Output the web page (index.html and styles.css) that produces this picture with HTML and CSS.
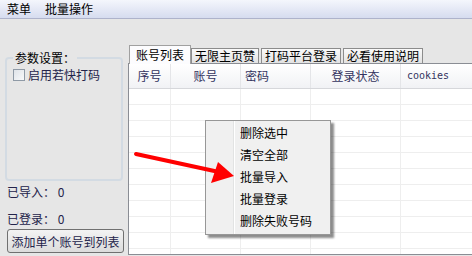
FILE: index.html
```html
<!DOCTYPE html>
<html lang="zh-CN">
<head>
    <meta charset="UTF-8">
    <title>批量操作</title>
    <link rel="stylesheet" href="styles.css">
</head>
<body>

<!-- 菜单栏 -->
<div class="menubar">
    <span class="menu-item">菜单</span>
    <span class="menu-item">批量操作</span>
</div>

<div class="main">
    <!-- 左侧设置 -->
    <div class="side">
        <fieldset class="group">
            <legend>参数设置：</legend>
            <label class="check"><span class="box"></span>启用若快打码</label>
        </fieldset>
        <div class="stat stat-import">已导入： 0</div>
        <div class="stat stat-login">已登录： 0</div>
        <button class="btn">添加单个账号到列表</button>
    </div>

    <!-- 选项卡 -->
    <div class="tabs-area">
        <div class="tab-strip">
            <span class="tab active">账号列表</span>
            <span class="tab">无限主页赞</span>
            <span class="tab">打码平台登录</span>
            <span class="tab">必看使用说明</span>
        </div>
        <div class="listview">
            <div class="lv-head">
                <div class="col c1 center">序号</div>
                <div class="col c2 center">账号</div>
                <div class="col c3">密码</div>
                <div class="col c4 center">登录状态</div>
                <div class="col c5 mono">cookies</div>
            </div>
            <div class="lv-body" id="rows"></div>
        </div>
    </div>
</div>

<!-- 右键菜单 -->
<div class="ctx-menu">
    <div class="ctx-item">删除选中</div>
    <div class="ctx-item">清空全部</div>
    <div class="ctx-item">批量导入</div>
    <div class="ctx-item">批量登录</div>
    <div class="ctx-item">删除失败号码</div>
</div>

<!-- 红色箭头 -->
<svg class="arrow" width="472" height="256" viewBox="0 0 472 256">
    <line x1="136" y1="154" x2="219" y2="172" stroke="#ff0000" stroke-width="4" stroke-linecap="round"/>
    <polygon points="234,176 218,162 211,183" fill="#ff0000"/>
</svg>

<script>
    // 填充空行
    var rows = document.getElementById("rows");
    for (var i = 0; i < 11; i++) {
        var row = document.createElement("div");
        row.className = "lv-row";
        for (var j = 1; j <= 5; j++) {
            var cell = document.createElement("div");
            cell.className = "col c" + j;
            row.appendChild(cell);
        }
        rows.appendChild(row);
    }
</script>

</body>
</html>
```

FILE: styles.css
```css
body {
    margin: 0;
    width: 472px;
    height: 256px;
    overflow: hidden;
    background-color: #e6e6e6;
    font-family: "Noto Sans CJK SC", "Noto Sans", sans-serif;
    font-size: 12px;
    color: #000;
    position: relative;
}
.menubar {
    height: 18px;
    background: linear-gradient(#f4f6fc, #d6dcef);
    border-bottom: 1px solid #aeb3cb;
    display: flex;
    align-items: center;
}
.menu-item {
    padding: 0 7px;
    line-height: 18px;
}
.main {
    display: flex;
}
.side {
    width: 128px;
    flex-shrink: 0;
    padding-left: 5px;
    box-sizing: border-box;
    color: #23234a;
}
.group {
    margin: 32px 0 0 0;
    width: 118px;
    height: 130px;
    box-sizing: border-box;
    border: 2px solid #d3dbe3;
    border-radius: 4px;
    padding: 3px 6px;
}
.group legend {
    padding: 0 2px;
    line-height: 14px;
    color: #000;
}
.check {
    display: flex;
    align-items: center;
    line-height: 14px;
}
.box {
    width: 10px;
    height: 10px;
    border: 1px solid #8f9aa6;
    background: linear-gradient(135deg, #dfe3e8, #f8f9fa);
    margin-right: 3px;
}
.stat {
    line-height: 16px;
    padding-left: 2px;
}
.stat-import {
    margin-top: 3px;
}
.stat-login {
    margin-top: 11px;
}
.btn {
    margin-top: 2px;
    margin-left: 2px;
    width: 117px;
    height: 24px;
    padding: 0;
    border: 1px solid #707070;
    border-radius: 3px;
    background: linear-gradient(#f3f3f3, #dcdcdc);
    font-family: inherit;
    font-size: 12px;
    color: #23234a;
}
.tabs-area {
    flex: 1;
    padding-top: 26px;
}
.tab-strip {
    height: 18px;
    display: flex;
    align-items: flex-end;
    padding-left: 3px;
}
.tab {
    height: 14px;
    line-height: 14px;
    padding: 0 3px;
    border: 1px solid #8c8c8c;
    border-bottom: none;
    background: linear-gradient(#fafafa, #e2e2e2);
    margin-right: 2px;
}
.tab.active {
    height: 18px;
    line-height: 18px;
    margin: 0 0 -1px -2px;
    padding: 0 6px;
    background: #fcfcfe;
    border-color: #a0a0a0;
    position: relative;
}
.listview {
    height: 190px;
    background: #fff;
    border: 1px solid #8a8d94;
    border-right: none;
    overflow: hidden;
}
.lv-head {
    display: flex;
    height: 24px;
    background: linear-gradient(#ffffff, #f1f2f5);
    border-bottom: 1px solid #d6d7db;
    color: #33335e;
    line-height: 24px;
}
.lv-head .col {
    border-right: 1px solid #e4e5e8;
}
.col {
    box-sizing: border-box;
    padding-left: 4px;
    flex-shrink: 0;
}
.center {
    text-align: center;
    padding-left: 0;
}
.c1 { width: 42px; }
.c2 { width: 70px; }
.c3 { width: 70px; }
.c4 { width: 90px; }
.c5 { width: 72px; padding-left: 6px; }
.mono {
    font-family: "DejaVu Sans Mono", monospace;
    font-size: 10px;
}
.lv-row {
    display: flex;
    height: 16px;
    box-sizing: border-box;
    border-bottom: 1px solid #eeeeee;
}
.lv-row .col {
    border-right: 1px solid #eeeeee;
}
.lv-row .c5 {
    border-right: none;
}
.ctx-menu {
    position: absolute;
    left: 205px;
    top: 120px;
    width: 124px;
    padding: 1px 0 2px;
    background: #f0f0f0;
    border: 1px solid #979797;
    box-shadow: 3px 3px 2px rgba(0, 0, 0, 0.45);
    background-image: linear-gradient(90deg, transparent 27px, #e2e3e3 27px, #e2e3e3 28px, #ffffff 28px, #ffffff 29px, transparent 29px);
}
.ctx-item {
    height: 22px;
    line-height: 22px;
    padding-left: 34px;
}
.arrow {
    position: absolute;
    left: 0;
    top: 0;
    pointer-events: none;
}
```
